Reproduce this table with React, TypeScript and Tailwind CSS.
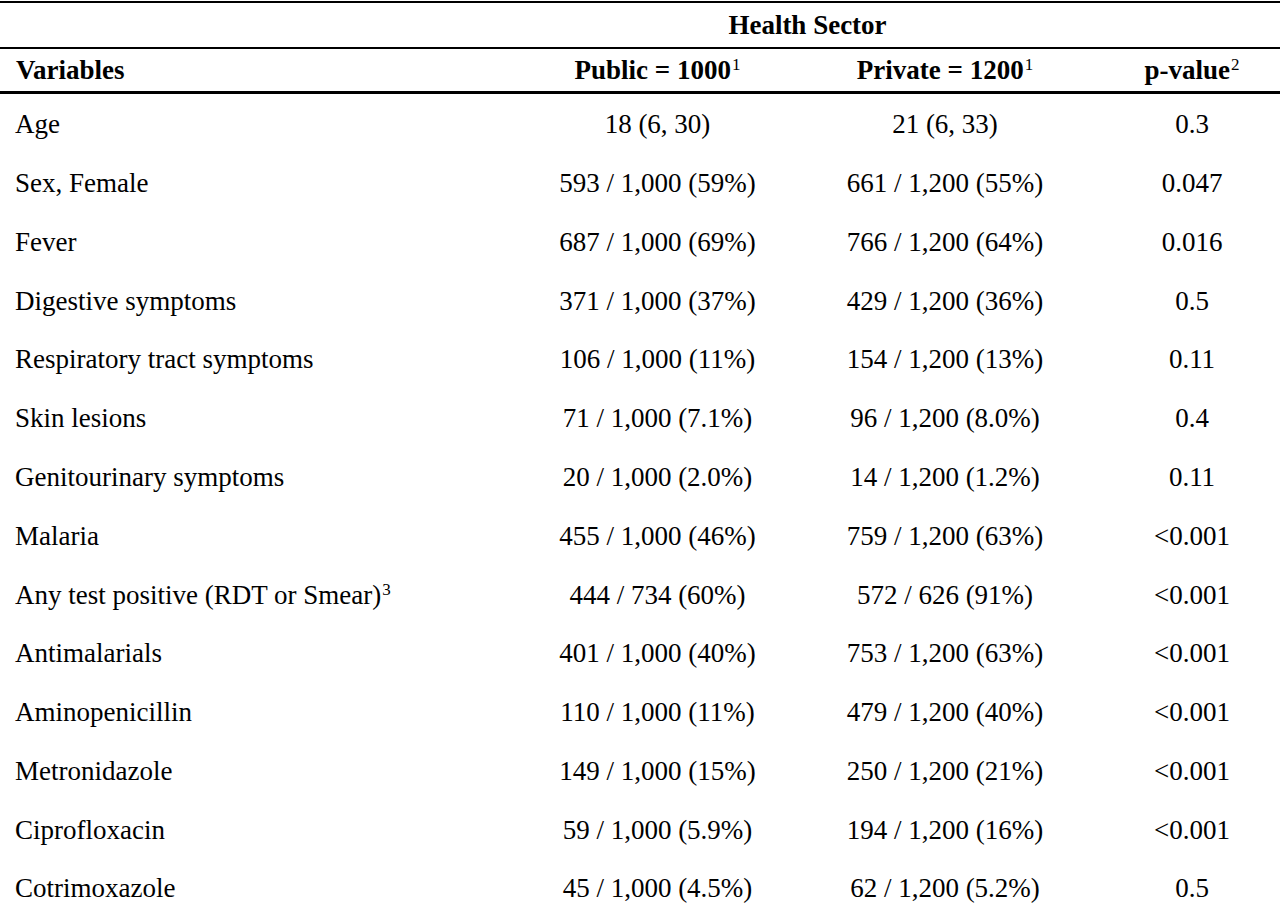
import React from 'react';

interface Row {
    label: string;
    note?: string;
    pub: string;
    priv: string;
    p: string;
}

const rows: Row[] = [
    { label: 'Age', pub: '18 (6, 30)', priv: '21 (6, 33)', p: '0.3' },
    { label: 'Sex, Female', pub: '593 / 1,000 (59%)', priv: '661 / 1,200 (55%)', p: '0.047' },
    { label: 'Fever', pub: '687 / 1,000 (69%)', priv: '766 / 1,200 (64%)', p: '0.016' },
    { label: 'Digestive symptoms', pub: '371 / 1,000 (37%)', priv: '429 / 1,200 (36%)', p: '0.5' },
    { label: 'Respiratory tract symptoms', pub: '106 / 1,000 (11%)', priv: '154 / 1,200 (13%)', p: '0.11' },
    { label: 'Skin lesions', pub: '71 / 1,000 (7.1%)', priv: '96 / 1,200 (8.0%)', p: '0.4' },
    { label: 'Genitourinary symptoms', pub: '20 / 1,000 (2.0%)', priv: '14 / 1,200 (1.2%)', p: '0.11' },
    { label: 'Malaria', pub: '455 / 1,000 (46%)', priv: '759 / 1,200 (63%)', p: '<0.001' },
    { label: 'Any test positive (RDT or Smear)', note: '3', pub: '444 / 734 (60%)', priv: '572 / 626 (91%)', p: '<0.001' },
    { label: 'Antimalarials', pub: '401 / 1,000 (40%)', priv: '753 / 1,200 (63%)', p: '<0.001' },
    { label: 'Aminopenicillin', pub: '110 / 1,000 (11%)', priv: '479 / 1,200 (40%)', p: '<0.001' },
    { label: 'Metronidazole', pub: '149 / 1,000 (15%)', priv: '250 / 1,200 (21%)', p: '<0.001' },
    { label: 'Ciprofloxacin', pub: '59 / 1,000 (5.9%)', priv: '194 / 1,200 (16%)', p: '<0.001' },
    { label: 'Cotrimoxazole', pub: '45 / 1,000 (4.5%)', priv: '62 / 1,200 (5.2%)', p: '0.5' },
];

const cols = 'grid grid-cols-[520px_275px_300px_185px]';

const Sup: React.FC<{ n: string }> = ({ n }) => (
    <sup className="text-[17px] font-normal relative -top-[9px] ml-px">{n}</sup>
);

export default function App() {
    return (
        <div className="w-[1280px] h-[904px] overflow-hidden bg-white text-black text-[27px] leading-none font-['Liberation_Serif','Times_New_Roman',serif]">
            <div className="pt-px">
                {/* top rule + spanning header */}
                <div className={`${cols} h-[48px] border-t-2 border-b-2 border-black font-bold`}>
                    <div className="col-start-2 col-span-2 flex items-center justify-center">Health Sector</div>
                </div>
                <div className={`${cols} h-[45px] border-b-[3px] border-black font-bold`}>
                    <div className="flex items-center pl-[16px]">Variables</div>
                    <div className="flex items-center justify-center">
                        <span>
                            Public = 1000<Sup n="1" />
                        </span>
                    </div>
                    <div className="flex items-center justify-center">
                        <span>
                            Private = 1200<Sup n="1" />
                        </span>
                    </div>
                    <div className="flex items-center justify-center pl-[9px]">
                        <span>
                            p-value<Sup n="2" />
                        </span>
                    </div>
                </div>

                {rows.map((r) => (
                    <div key={r.label} className={`${cols} h-[58.77px] pt-[3px]`}>
                        <div className="flex items-center pl-[15px]">
                            <span>
                                {r.label}
                                {r.note && <Sup n={r.note} />}
                            </span>
                        </div>
                        <div className="flex items-center justify-center">{r.pub}</div>
                        <div className="flex items-center justify-center">{r.priv}</div>
                        <div className="flex items-center justify-center pl-[9px]">{r.p}</div>
                    </div>
                ))}
            </div>
        </div>
    );
}
